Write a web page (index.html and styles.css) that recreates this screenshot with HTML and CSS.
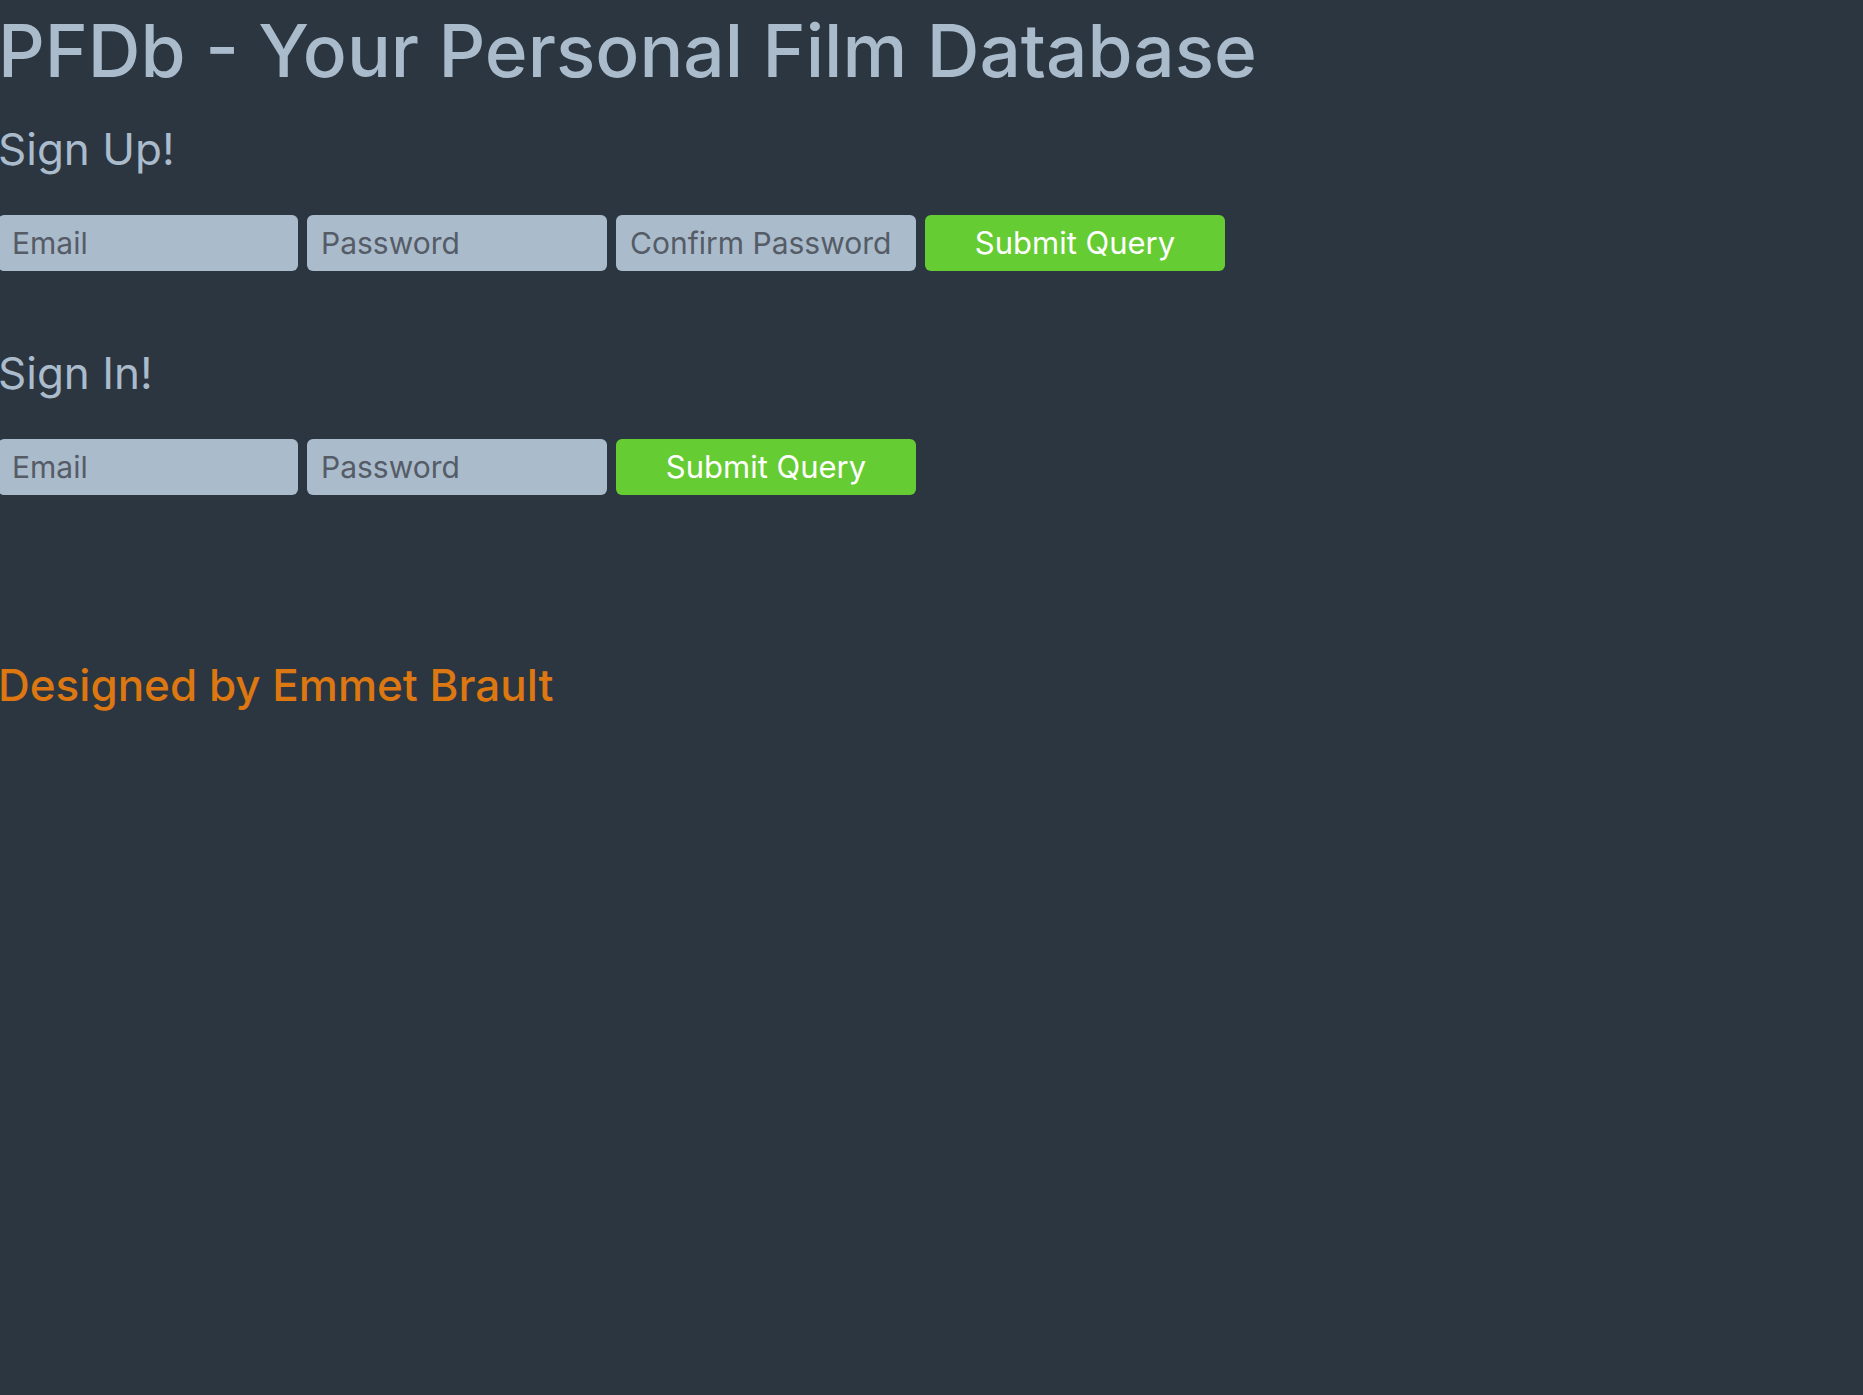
FILE: index.html
```html
<!DOCTYPE html>
<html lang="en">
<head>
  <meta charset="utf-8">
  <meta name="viewport" content="width=device-width, initial-scale=1">
  <title>PFDb - Your Personal Film Database</title>
  <link rel="stylesheet" href="styles.css">
</head>
<body>
  <main>
    <h1 class="title">PFDb - Your Personal Film Database</h1>
    <section class="account">
      <h2 class="heading">Sign Up!</h2>
      <form class="form">
        <input class="field" type="email" placeholder="Email" aria-label="Email">
        <input class="field" type="password" placeholder="Password" aria-label="Password">
        <input class="field" type="password" placeholder="Confirm Password" aria-label="Confirm Password">
        <button class="submit" type="submit">Submit Query</button>
      </form>
    </section>
    <section class="account">
      <h2 class="heading">Sign In!</h2>
      <form class="form">
        <input class="field" type="email" placeholder="Email" aria-label="Email">
        <input class="field" type="password" placeholder="Password" aria-label="Password">
        <button class="submit" type="submit">Submit Query</button>
      </form>
    </section>
  </main>
  <footer class="footer">Designed by Emmet Brault</footer>
</body>
</html>
```

FILE: styles.css
```css
* {
  box-sizing: border-box;
}

body {
  min-height: 100vh;
  margin: 0 0 0 -2px;
  background: #2c3640;
  color: #aabbcc;
  font-family: Inter, "Liberation Sans", sans-serif;
}

.title {
  margin: 0;
  padding: 5px 0 16px;
  font-size: 73px;
  font-weight: 500;
  line-height: 92px;
}

.account {
  padding-bottom: 66px;
}

.heading {
  margin: 0;
  padding: 6px 0 36px;
  font-size: 44px;
  font-weight: 400;
  line-height: 60px;
}

.form {
  display: flex;
  flex-wrap: wrap;
  gap: 9px;
}

.field,
.submit {
  width: 300px;
  height: 56px;
  border: 0;
  border-radius: 6px;
  font: 400 31px/38px Inter, "Liberation Sans", sans-serif;
}

.field {
  padding: 0 14px;
  background: #aabbcc;
  color: #2c3640;
  font-size: 30px;
}

.field::placeholder {
  color: #555c66;
  opacity: 1;
}

.submit {
  padding: 0;
  background: #66cc33;
  color: #fff;
  cursor: pointer;
}

.footer {
  padding-top: 94px;
  color: #dd7711;
  font-size: 44px;
  font-weight: 500;
  line-height: 60px;
}
```
